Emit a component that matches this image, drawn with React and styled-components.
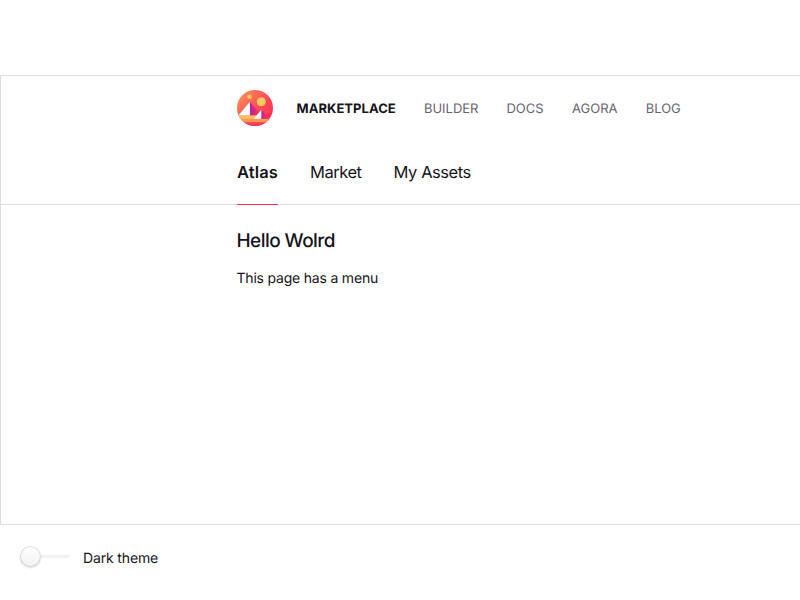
import React from 'react';
import styled, { createGlobalStyle, css } from 'styled-components';

const GlobalStyle = createGlobalStyle`
  body {
    margin: 0;
    background: #fff;
    color: #16141a;
    font-family: Inter, "Liberation Sans", sans-serif;
    -webkit-font-smoothing: antialiased;
    text-rendering: geometricPrecision;
    overflow: hidden;
  }
`;

const Page = styled.div`
  padding-top: 75px;
`;

const Frame = styled.div`
  box-sizing: border-box;
  height: 450px;
  border: 1px solid #ddd;
  border-right: 0;
`;

const Header = styled.header`
  box-sizing: border-box;
  height: 129px;
  padding: 14px 0 0 236px;
  border-bottom: 1px solid #ddd;
`;

const MainMenu = styled.nav`
  display: flex;
  align-items: center;
  height: 36px;
`;

const Logo = styled.svg`
  width: 36px;
  height: 36px;
  margin-right: 23.5px;
`;

const MainItem = styled.a`
  width: ${(p) => p.$width}px;
  margin-right: 28.6px;
  padding-top: 1px;
  white-space: nowrap;
  font-size: 13px;
  line-height: 18px;
  text-transform: uppercase;
  color: #676370;
  ${(p) => p.$active && css`
    font-weight: 650;
    letter-spacing: 0.05px;
    color: #16141a;
  `}
`;

const Tabs = styled.nav`
  display: flex;
  gap: 32px;
  height: 79px;
`;

const Tab = styled.a`
  box-sizing: border-box;
  height: 79px;
  padding-top: 34px;
  white-space: nowrap;
  font-size: 16.5px;
  line-height: 25px;
  letter-spacing: -0.45px;
  border-bottom: 1px solid transparent;
  ${(p) => p.$active && css`
    font-weight: 600;
    letter-spacing: 0.12px;
    border-bottom-color: #ff2d55;
  `}
`;

const Content = styled.main`
  padding: 22px 0 0 235.5px;
`;

const Title = styled.h1`
  margin: 0;
  font-size: 19px;
  line-height: 27px;
  font-weight: 500;
  letter-spacing: -0.55px;
`;

const Text = styled.p`
  margin: 14px 0 0;
  font-size: 14px;
  line-height: 21px;
  letter-spacing: -0.2px;
`;

const ThemeSwitch = styled.label`
  display: flex;
  align-items: center;
  margin: 20px 0 0 20px;
  height: 24px;
`;

const Track = styled.span`
  display: flex;
  align-items: center;
  width: 49px;
  height: 3px;
  margin: 0 14px 1px 0;
  border-radius: 2px;
  background: #f2f2f2;
`;

const Knob = styled.span`
  box-sizing: border-box;
  width: 21px;
  height: 21px;
  border-radius: 50%;
  background: linear-gradient(transparent, rgba(0, 0, 0, 0.05)) #fff;
  box-shadow: 0 1px 2px 0 rgba(34, 36, 38, 0.15), 0 0 0 1px rgba(34, 36, 38, 0.15) inset;
`;

const SwitchLabel = styled.span`
  font-size: 14px;
  line-height: 20px;
  letter-spacing: -0.15px;
  padding-top: 4px;
`;

function DecentralandLogo() {
  return (
    <Logo viewBox="0 0 36 36">
      <defs>
        <linearGradient id="sky" x1="0.9" y1="0.85" x2="0.1" y2="0.15">
          <stop offset="0" stopColor="#ff2d55" />
          <stop offset="0.45" stopColor="#ff4c56" />
          <stop offset="1" stopColor="#ff8a57" />
        </linearGradient>
        <linearGradient id="shade" x1="0" y1="0" x2="1" y2="0">
          <stop offset="0" stopColor="#b324a8" />
          <stop offset="0.85" stopColor="#ff2d55" />
        </linearGradient>
        <clipPath id="disc"><circle cx="18" cy="18" r="18" /></clipPath>
      </defs>
      <g clipPath="url(#disc)">
        <rect width="36" height="36" fill="url(#sky)" />
        <circle cx="12.6" cy="6.8" r="2.25" fill="#ffc95b" />
        <circle cx="24.3" cy="11.7" r="4.5" fill="#ffc95b" />
        <rect y="25.2" width="24" height="3.8" fill="#ffbc5b" />
        <rect y="28.8" width="36" height="3.8" fill="#fc9955" />
        <rect y="32.4" width="36" height="3.6" fill="#ff3b55" />
        <path d="M12.85 11.7V25.2H24.1z" fill="url(#shade)" />
        <path d="M12.85 11.7V25.2H1.6z" fill="#fff" />
        <path d="M24.3 19.8V28.8H31.8z" fill="url(#shade)" />
        <path d="M24.3 19.8V28.8H16.8z" fill="#fff" />
      </g>
    </Logo>
  );
}

export default function App() {
  return (
    <>
      <GlobalStyle />
      <Page>
        <Frame>
          <Header>
            <MainMenu>
              <DecentralandLogo />
              <MainItem $active $width={98.8}>Marketplace</MainItem>
              <MainItem $width={54}>Builder</MainItem>
              <MainItem $width={37}>Docs</MainItem>
              <MainItem $width={45}>Agora</MainItem>
              <MainItem $width={35}>Blog</MainItem>
            </MainMenu>
            <Tabs>
              <Tab $active>Atlas</Tab>
              <Tab>Market</Tab>
              <Tab>My Assets</Tab>
            </Tabs>
          </Header>
          <Content>
            <Title>Hello Wolrd</Title>
            <Text>This page has a menu</Text>
          </Content>
        </Frame>
        <ThemeSwitch>
          <Track><Knob /></Track>
          <SwitchLabel>Dark theme</SwitchLabel>
        </ThemeSwitch>
      </Page>
    </>
  );
}
